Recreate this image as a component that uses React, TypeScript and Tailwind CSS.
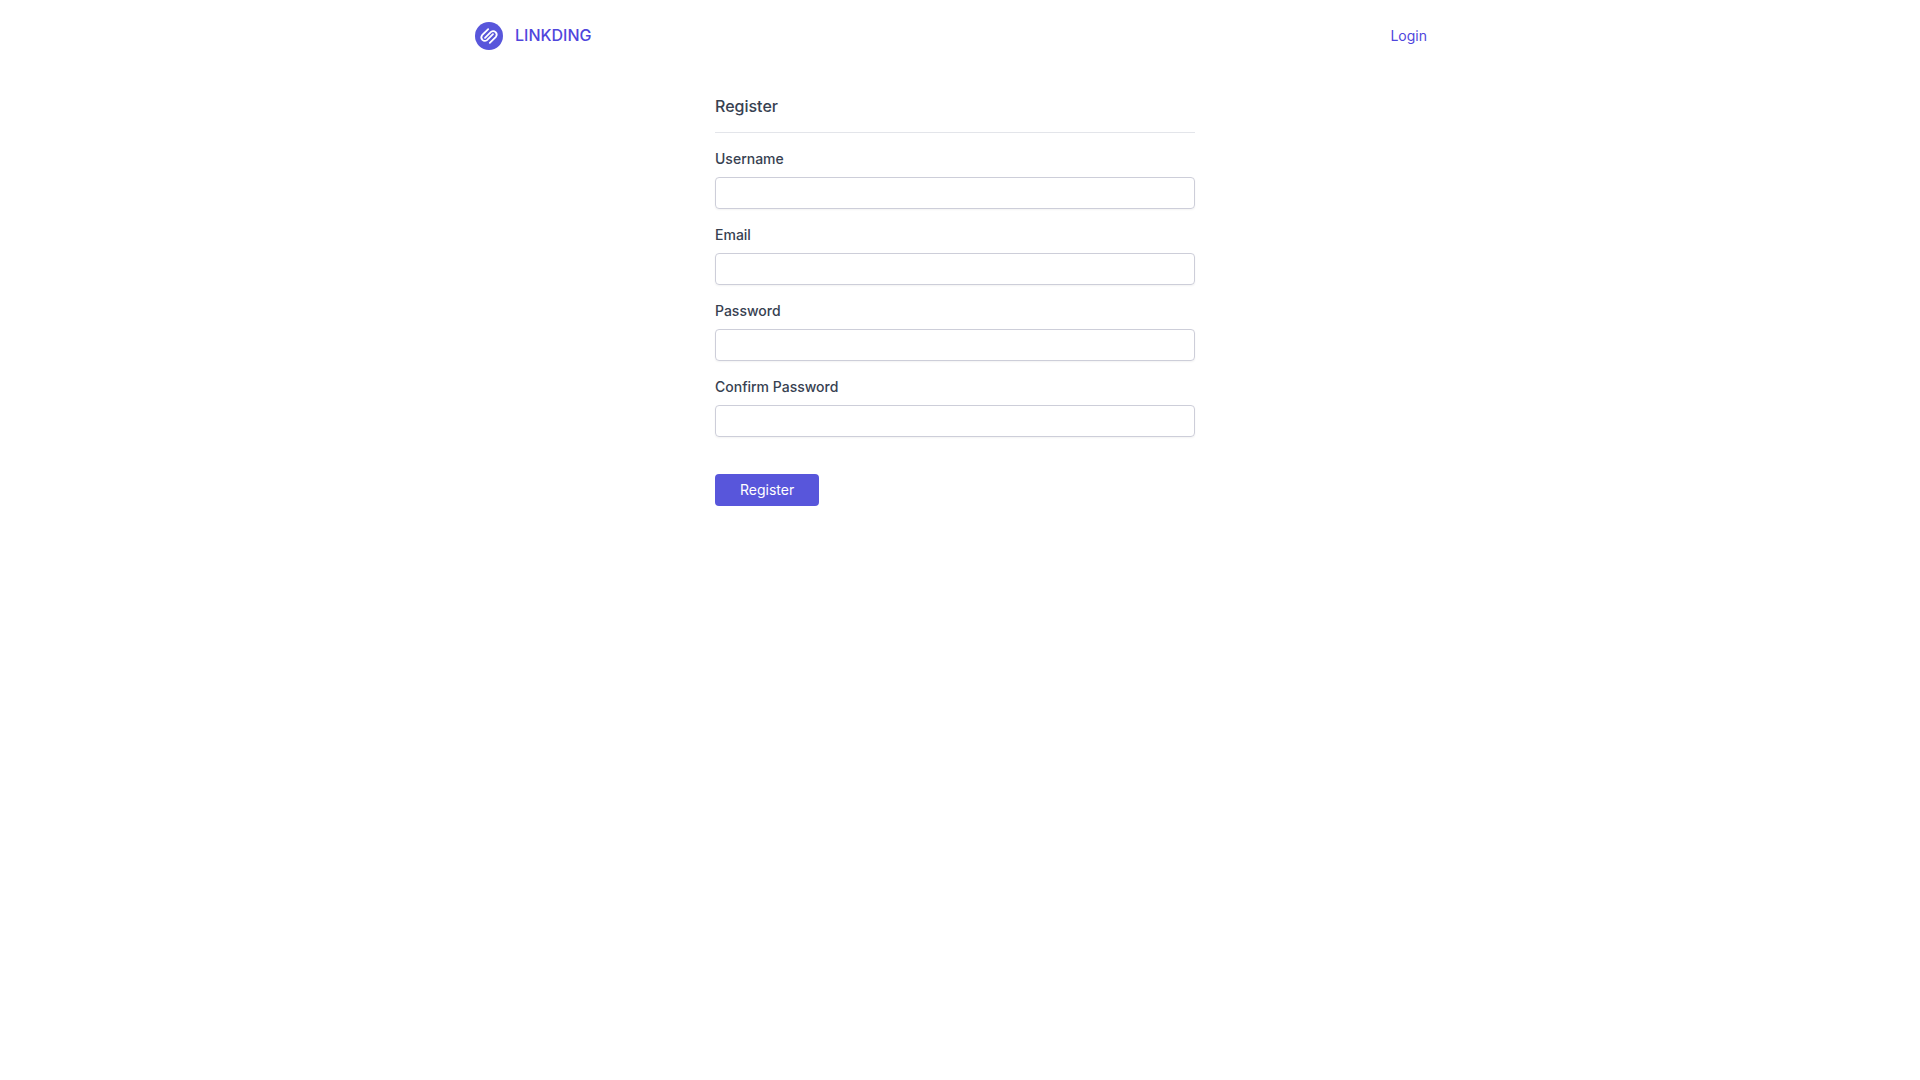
import { useState } from 'react'
import type { FormEvent } from 'react'

const FIELDS = [
  { id: 'username', label: 'Username', type: 'text' },
  { id: 'email', label: 'Email', type: 'email' },
  { id: 'password1', label: 'Password', type: 'password' },
  { id: 'password2', label: 'Confirm Password', type: 'password' },
]

function Logo() {
  return (
    <svg viewBox="0 0 28 28" className="size-7" aria-hidden="true">
      <circle cx="14" cy="14" r="14" fill="#5856db" />
      <g fill="none" stroke="#fff" strokeWidth="1.8" strokeLinecap="round" strokeLinejoin="round">
        <path d="M13.2 7.1 L7.1 13.2 A3.5 3.5 0 0 0 12 18.1 L18 12.1" />
        <path d="M14.8 20.9 L20.9 14.8 A3.5 3.5 0 0 0 16 9.9 L10 15.9" />
      </g>
    </svg>
  )
}

export default function App() {
  const [values, setValues] = useState<Record<string, string>>({})

  function handleSubmit(e: FormEvent) {
    e.preventDefault()
  }

  return (
    <div className="min-h-screen bg-white pr-2.5 font-['Inter',sans-serif] text-sm text-[#374151]">
      <div className="mx-auto max-w-[960px]">
        <header className="flex items-center justify-between py-[18px] text-[#4f46dc]">
          <a href="#" className="flex h-9 items-center gap-3">
            <Logo />
            <span className="pb-0.5 text-base/6 font-medium">LINKDING</span>
          </a>
          <nav>
            <a href="#login" className="px-2">Login</a>
          </nav>
        </header>

        <main className="mx-auto mt-[22px] max-w-[480px]">
          <div className="border-b border-[#e3e5ea] pb-3.5">
            <h1 className="text-base/6 font-medium">Register</h1>
          </div>
          <form onSubmit={handleSubmit} className="mt-4">
            <div className="flex flex-col gap-4">
              {FIELDS.map(f => (
                <div key={f.id}>
                  <label htmlFor={f.id} className="mb-2 block text-sm/5 font-medium">
                    {f.label}
                  </label>
                  <input
                    id={f.id}
                    name={f.id}
                    type={f.type}
                    value={values[f.id] || ''}
                    onChange={e => setValues({ ...values, [f.id]: e.target.value })}
                    className="block h-8 w-full rounded border border-[#cdced9] px-2 shadow-xs outline-none focus:border-[#5856db]"
                  />
                </div>
              ))}
            </div>
            <button
              type="submit"
              className="mt-[37px] h-8 rounded bg-[#5856db] px-[25px] text-white"
            >
              Register
            </button>
          </form>
        </main>
      </div>
    </div>
  )
}
